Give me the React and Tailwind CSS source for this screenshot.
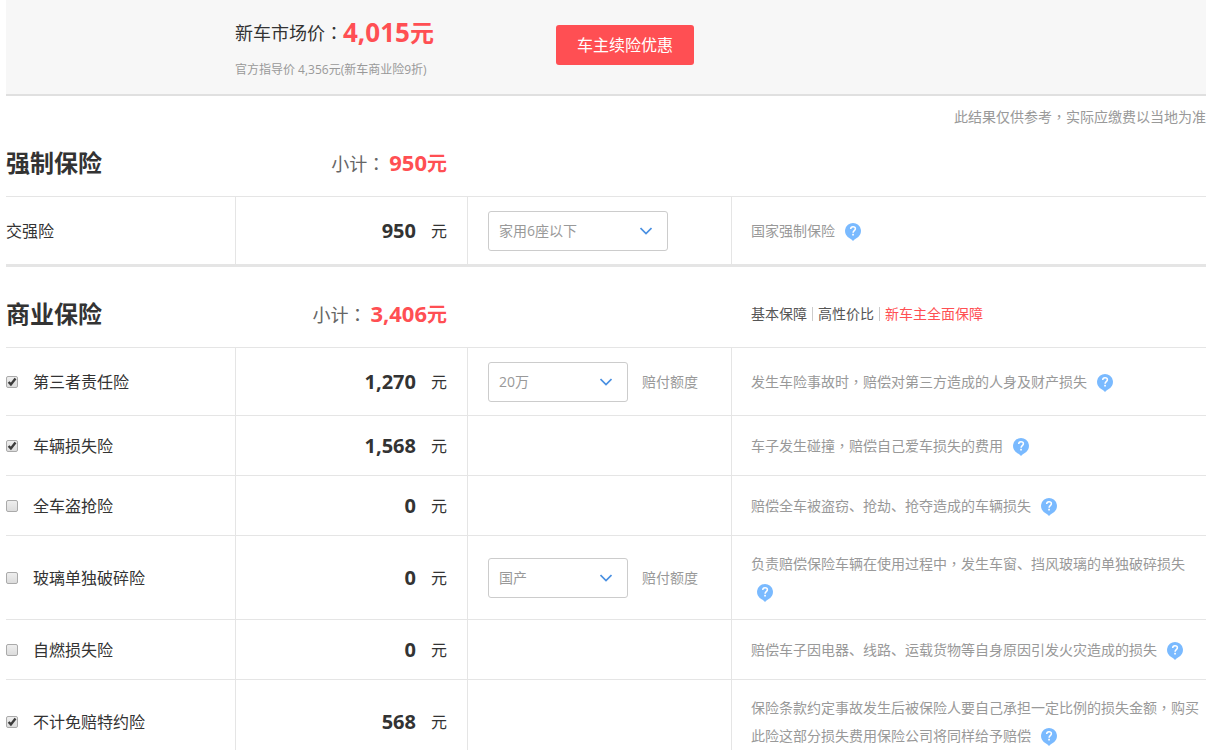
import React, { useState } from "react";

const REQUIRED = [
    {
        id: "jiaoqiang",
        name: "交强险",
        price: "950",
        height: "h-[68px]",
        options: ["家用6座以下", "家用6座及以上"],
        selectWidth: "w-[180px]",
        info: "国家强制保险",
    },
]

const COMMERCIAL = [
    { id: "disanzhe", name: "第三者责任险", price: "1,270", checked: true, height: "h-[68px]", options: ["20万", "50万", "100万"], selectWidth: "w-[140px]", selectLabel: "赔付额度", info: "发生车险事故时\uFF0C赔偿对第三方造成的人身及财产损失" },
    { id: "chesun", name: "车辆损失险", price: "1,568", checked: true, height: "h-[60px]", info: "车子发生碰撞\uFF0C赔偿自己爱车损失的费用" },
    { id: "daoqiang", name: "全车盗抢险", price: "0", checked: false, height: "h-[60px]", info: "赔偿全车被盗窃、抢劫、抢夺造成的车辆损失" },
    { id: "boli", name: "玻璃单独破碎险", price: "0", checked: false, height: "h-[84px]", options: ["国产", "进口"], selectWidth: "w-[140px]", selectLabel: "赔付额度", info: "负责赔偿保险车辆在使用过程中\uFF0C发生车窗、挡风玻璃的单独破碎损失" },
    { id: "ziran", name: "自燃损失险", price: "0", checked: false, height: "h-[60px]", info: "赔偿车子因电器、线路、运载货物等自身原因引发火灾造成的损失" },
    { id: "bujimian", name: "不计免赔特约险", price: "568", checked: true, height: "h-[84px]", info: "保险条款约定事故发生后被保险人要自己承担一定比例的损失金额\uFF0C购买此险这部分损失费用保险公司将同样给予赔偿" },
]

// the TC face centres full-width commas and colons in their box
function Text({ children }) {
    return children.split(/([\uFF0C\uFF1A])/).map((part, i) =>
        part === "\uFF0C" || part === "\uFF1A"
            ? <span key={i} className="font-['Noto_Sans_CJK_TC',sans-serif]">{part}</span>
            : part
    )
}

function HelpIcon() {
    return (
        <svg className="inline-block ml-[6px] align-middle" width="16" height="18" viewBox="0 0 16 18" aria-hidden="true">
            <path d="M8 0a8 8 0 0 1 3 15.4c-1 .4-2 1.2-3 2.6-1-1.400-2-2.200-3-2.600A8 8 0 0 1 8 0z" fill="#7abaff" />
            <path d="M5.700 6.100C5.700 4.500 6.700 3.700 8 3.700s2.400.8 2.400 2.100c0 1.800-2.300 1.900-2.300 3.900" fill="none" stroke="#fff" strokeWidth="1.500" />
            <rect x="7.200" y="10.800" width="1.700" height="1.700" fill="#fff" />
        </svg>
    )
}

function Select({ id, label, options, width }) {
    return (
        <div className={"relative " + width}>
            <select id={id} aria-label={label} className="appearance-none w-full h-10 pl-[10px] pr-8 rounded-[3px] border border-[#ccc] bg-white text-sm text-[#999] focus:outline-none">
                {options.map((option) => <option key={option}>{option}</option>)}
            </select>
            <svg className="absolute right-4 top-4 pointer-events-none" width="12" height="8" viewBox="0 0 12 8" fill="none">
                <path d="M.5 1 6 6.500 11.500 1" stroke="#4a90e2" strokeWidth="1.700" />
            </svg>
        </div>
    )
}

function Checkbox({ id, checked, onChange }) {
    return (
        <span className="relative block size-3 shrink-0">
            <input id={id} type="checkbox" checked={checked} onChange={onChange} className="appearance-none block size-3 rounded-[2px] border border-[#aaa] bg-linear-to-b from-[#eee] to-[#dcdcdc]" />
            {checked && <svg className="absolute inset-0 pointer-events-none" width="12" height="12" viewBox="0 0 12 12" fill="none">
                <path d="M2.600 6 4.900 8.400 9.500 2.600" stroke="#3c3c3c" strokeWidth="2.400" />
            </svg>}
        </span>
    )
}

function Subtotal({ amount }) {
    return (
        <p className="flex items-center justify-end pr-[21px] leading-6">
            <span className="text-lg leading-6 text-[#666] mr-1"><Text>{"小计\uFF1A"}</Text></span>
            <strong className="text-[22px] leading-6 text-[#ff4f53]">{amount}<span className="text-xl leading-6">元</span></strong>
        </p>
    )
}

function SectionHeader({ title, amount, children }) {
    return (
        <div className="grid grid-cols-[230px_232px_264px_1fr] items-center h-[60px] pb-[6px]">
            <h2 className="text-2xl font-bold">{title}</h2>
            <Subtotal amount={amount} />
            <div></div>
            <div className="pl-[19px]">{children}</div>
        </div>
    )
}

function InsuranceTable({ rows, selected, onToggle }) {
    return (
        <table className="w-full table-fixed border-separate border-spacing-0">
            <colgroup>
                <col className="w-[230px]" />
                <col className="w-[232px]" />
                <col className="w-[264px]" />
                <col />
            </colgroup>
            <tbody>
                {rows.map((row) => (
                    <tr key={row.id} className={row.height}>
                        <td className="border-t border-r border-[#e5e5e5]">
                            {onToggle ? <div className="flex items-center gap-[15px]">
                                <Checkbox id={row.id} checked={selected[row.id]} onChange={() => onToggle(row.id)} />
                                <label htmlFor={row.id}>{row.name}</label>
                            </div> : row.name}
                        </td>
                        <td className="border-t border-r border-[#e5e5e5] pr-5">
                            <div className="flex items-center justify-end gap-[15px]">
                                <strong className="text-xl leading-6">{row.price}</strong>
                                <span>元</span>
                            </div>
                        </td>
                        <td className="border-t border-r border-[#e5e5e5] pl-5">
                            {row.options && <div className="flex items-center gap-[14px]">
                                <Select id={row.id + "-option"} label={row.name} options={row.options} width={row.selectWidth} />
                                {row.selectLabel && <label htmlFor={row.id + "-option"} className="text-sm text-[#999]">{row.selectLabel}</label>}
                            </div>}
                        </td>
                        <td className="border-t border-[#e5e5e5] pl-[19px] text-sm leading-7 text-[#999]">
                            <Text>{row.info}</Text> <HelpIcon />
                        </td>
                    </tr>
                ))}
            </tbody>
        </table>
    )
}

export default function App() {
    const [selected, setSelected] = useState(
        Object.fromEntries(COMMERCIAL.map((row) => [row.id, row.checked]))
    )

    const handleToggle = (id) => {
        setSelected({ ...selected, [id]: !selected[id] })
    }

    return (
        <div className="pl-[6px] pr-px bg-white text-base text-[#333] font-['Open_Sans','Noto_Sans_CJK_SC',sans-serif]">
            <header className="flex items-start pl-[229px] h-24 bg-[#f7f7f7] border-b-2 border-[#e0e0e0]">
                <div className="w-[321px] pt-4">
                    <p className="flex items-center h-8 text-lg">
                        <span><Text>{"新车市场价\uFF1A"}</Text></span>
                        <strong className="text-[26px] leading-8 text-[#ff4f53]">4,015<span className="text-2xl leading-8">元</span></strong>
                    </p>
                    <p className="mt-3 text-xs leading-5 text-[#999]">官方指导价 4,356元(新车商业险9折)</p>
                </div>
                <button type="button" className="mt-[25px] w-[138px] h-10 rounded-[3px] bg-[#ff4f53] text-white cursor-pointer">车主续险优惠</button>
            </header>

            <p className="h-10 text-right text-sm leading-10 text-[#999]"><Text>{"此结果仅供参考\uFF0C实际应缴费以当地为准"}</Text></p>

            <section className="border-b-3 border-[#e5e5e5]">
                <SectionHeader title="强制保险" amount="950" />
                <InsuranceTable rows={REQUIRED} />
            </section>

            <section className="mt-5">
                <SectionHeader title="商业保险" amount="3,406">
                    <nav className="flex items-center gap-[5px] text-sm text-[#555]">
                        <a href="#basic">基本保障</a>
                        <span className="w-px h-[14px] bg-[#ccc]"></span>
                        <a href="#value">高性价比</a>
                        <span className="w-px h-[14px] bg-[#ccc]"></span>
                        <a href="#full" className="text-[#ff4f53]">新车主全面保障</a>
                    </nav>
                </SectionHeader>
                <InsuranceTable rows={COMMERCIAL} selected={selected} onToggle={handleToggle} />
            </section>
        </div>
    )
}
